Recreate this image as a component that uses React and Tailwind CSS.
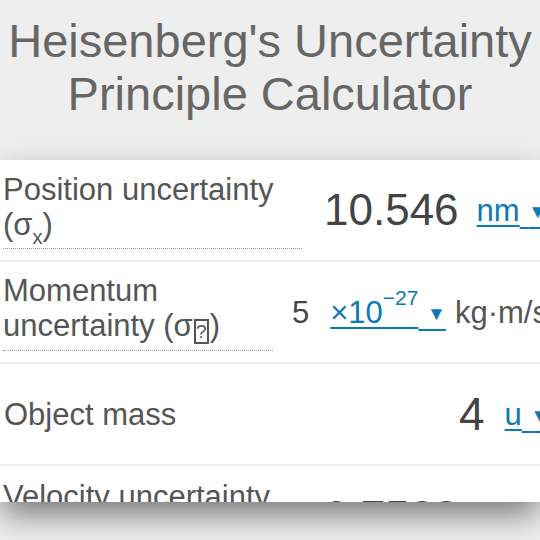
import React from 'react';

const font = "font-['Liberation_Sans',Arial,sans-serif]";

function Arrow() {
  return (
    <span className="underline decoration-2 underline-offset-[6px]">
      {' '}
      <span className="text-[19px] align-[3px]">▼</span>
    </span>
  );
}

function Unit({ children, className = '' }) {
  return (
    <span className={`text-[#0b79b3] text-[31px] leading-none whitespace-nowrap ${className}`}>
      <span className="underline decoration-2 underline-offset-[4px]">{children}</span>
      <Arrow />
    </span>
  );
}

function Label({ lines, width, dotted = true }) {
  return (
    <div
      className={`shrink-0 ml-[3px] text-[31px] leading-[35px] text-[#555] ${dotted ? 'border-b border-dotted border-[#999] pb-[6px]' : ''}`}
      style={{ width }}
    >
      {lines.map((l, i) => (
        <div key={i} className="whitespace-nowrap">{l}</div>
      ))}
    </div>
  );
}

export default function App() {
  return (
    <div className={`w-[540px] h-[540px] overflow-hidden bg-[#eeeeee] ${font}`}>
      <div className="h-[160px] pt-[14px] text-center text-[47px] leading-[53px] text-[#666] whitespace-nowrap">
        <div>Heisenberg's Uncertainty</div>
        <div>Principle Calculator</div>
      </div>

      <div className="relative z-10 h-[342px] overflow-hidden bg-white shadow-[0_14px_30px_-2px_rgba(0,0,0,0.5)]">
        {/* position */}
        <div className="h-[102px] flex items-center border-b-2 border-[#eeeeee] w-[700px]">
          <Label width={299} lines={['Position uncertainty', <>(σ<sub className="text-[20px] align-[-4px]">x</sub>)</>]} />
          <span className="ml-[22px] text-[44px] leading-none text-[#444]">10.546</span>
          <Unit className="ml-[18px]">nm</Unit>
        </div>

        {/* momentum */}
        <div className="h-[102px] flex items-center border-b-2 border-[#eeeeee] w-[800px]">
          <Label
            width={270}
            lines={[
              'Momentum',
              <>
                uncertainty (σ
                <span className="inline-block w-[15px] h-[25px] border-2 border-[#555] text-[19px] leading-[21px] text-center align-[-2px] mx-[1px]">?</span>
                )
              </>,
            ]}
          />
          <span className="ml-[19px] text-[31px] leading-none text-[#444]">5</span>
          <span className="ml-[21px] text-[#0b79b3] text-[31px] leading-none whitespace-nowrap">
            <span className="underline decoration-2 underline-offset-[4px]">
              ×10<sup className="text-[21px] align-[7px]">−27</sup>
            </span>
            <Arrow />
          </span>
          <span className="ml-[9px] text-[31px] leading-none text-[#555] whitespace-nowrap">kg·m/s</span>
        </div>

        {/* mass */}
        <div className="h-[102px] flex items-center border-b-2 border-[#eeeeee] w-[700px]">
          <div className="shrink-0 ml-[4px] w-[455px] text-[31px] leading-[35px] text-[#555] whitespace-nowrap">Object mass</div>
          <span className="text-[46px] leading-none text-[#444]">4</span>
          <Unit className="ml-[20px]">u</Unit>
        </div>

        {/* velocity */}
        <div className="h-[102px] flex items-center w-[800px]">
          <Label width={299} lines={['Velocity uncertainty', <>(σ<sub className="text-[20px] align-[-4px]">v</sub>)</>]} />
          <span className="ml-[22px] text-[44px] leading-none text-[#444]">0.7528</span>
          <Unit className="ml-[18px]">m/s</Unit>
        </div>
      </div>
    </div>
  );
}
